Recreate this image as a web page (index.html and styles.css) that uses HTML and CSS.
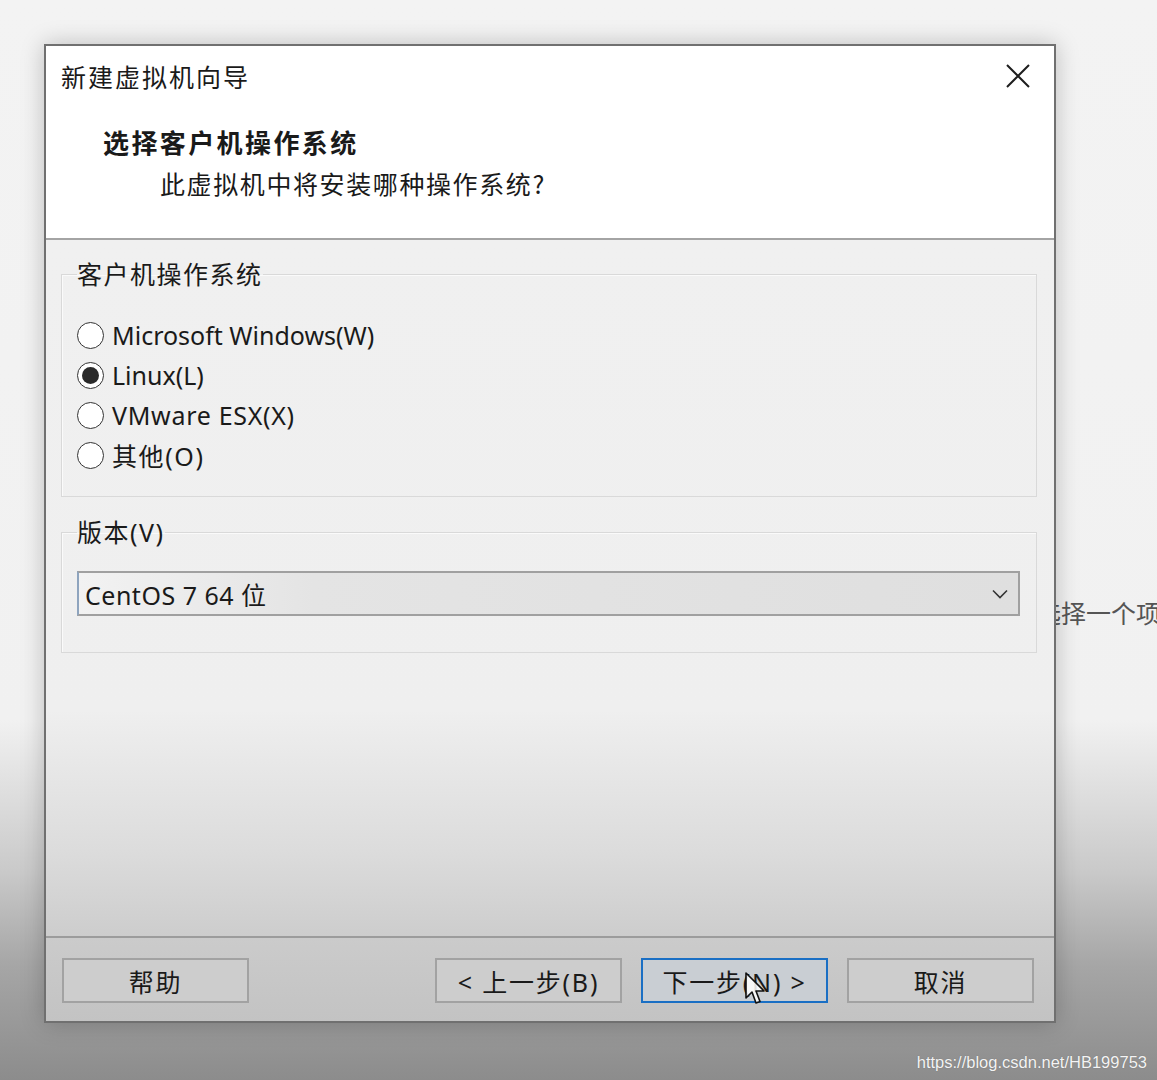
FILE: index.html
```html
<!DOCTYPE html>
<html lang="zh-CN">
<head>
    <meta charset="UTF-8">
    <title>新建虚拟机向导</title>
    <link rel="stylesheet" href="styles.css">
</head>
<body>

    <!-- window behind the wizard -->
    <div class="behind-text">选择一个项</div>

    <div class="dialog">
        <!-- Header -->
        <div class="header">
            <div class="title-row">
                <span class="title">新建虚拟机向导</span>
                <svg class="close" width="24" height="24" viewBox="0 0 24 24">
                    <path d="M1 1 L23 23 M23 1 L1 23" stroke="#1e1e1e" stroke-width="2" fill="none"/>
                </svg>
            </div>
            <div class="heading">选择客户机操作系统</div>
            <div class="subheading">此虚拟机中将安装哪种操作系统?</div>
        </div>

        <!-- Body -->
        <div class="body">
            <fieldset class="group group-os">
                <legend>客户机操作系统</legend>
                <div class="radio-row"><span class="radio"></span>Microsoft Windows(W)</div>
                <div class="radio-row"><span class="radio checked"></span>Linux(L)</div>
                <div class="radio-row wide"><span class="radio"></span>VMware ESX(X)</div>
                <div class="radio-row cjk"><span class="radio"></span>其他(O)</div>
            </fieldset>

            <fieldset class="group group-version">
                <legend>版本(V)</legend>
                <div class="select">
                    <span class="select-value">CentOS 7 64 位</span>
                    <svg width="16" height="10" viewBox="0 0 16 10">
                        <path d="M1 1.5 L8 8.5 L15 1.5" stroke="#333" stroke-width="1.6" fill="none"/>
                    </svg>
                </div>
            </fieldset>
        </div>

        <!-- Footer -->
        <div class="footer">
            <button class="btn">帮助</button>
            <div class="spacer"></div>
            <button class="btn">&lt; 上一步(B)</button>
            <button class="btn btn-default">下一步(N) &gt;</button>
            <button class="btn">取消</button>
        </div>

        <!-- mouse pointer over the Next button -->
        <svg class="cursor" width="22" height="34" viewBox="0 0 22 34">
            <path d="M1 1 L1 26 L7 20 L11 31 L15 29.5 L11 19 L19 19 Z" fill="#fff" fill-opacity="0.85" stroke="#111" stroke-width="1.6" stroke-linejoin="round"/>
        </svg>
    </div>

    <div class="watermark">https://blog.csdn.net/HB199753</div>

</body>
</html>
```

FILE: styles.css
```css
body {
    margin: 0;
    height: 1080px;
    overflow: hidden;
    position: relative;
    padding: 44px 0 0 44px;
    box-sizing: border-box;
    font-family: "Noto Sans", "Noto Sans CJK SC", sans-serif;
    color: #1a1a1a;
    background: linear-gradient(to bottom, #f3f3f3 0, #f1f1f1 720px, #cacaca 870px, #a6a6a6 965px, #8c8c8c 1080px);
}
.behind-text {
    position: absolute;
    left: 1036px;
    top: 594px;
    font-size: 25px;
    line-height: 36px;
    color: #555;
    white-space: nowrap;
    font-family: "Noto Sans CJK SC", sans-serif;
}
.dialog {
    position: relative;
    z-index: 1;
    width: 1012px;
    height: 979px;
    box-sizing: border-box;
    border: 2px solid #707070;
    display: flex;
    flex-direction: column;
    box-shadow: 0 0 22px rgba(0, 0, 0, 0.22);
    background: #f0f0f0;
}
.header {
    height: 194px;
    box-sizing: border-box;
    background: #fff;
    border-bottom: 2px solid #a4a4a4;
    padding: 12px 24px 0 15px;
}
.title-row {
    display: flex;
    justify-content: space-between;
    align-items: center;
    height: 36px;
}
.title {
    font-size: 25px;
    letter-spacing: 2px;
    font-family: "Noto Sans CJK SC", sans-serif;
}
.heading {
    margin: 30px 0 0 42px;
    font-size: 26px;
    line-height: 36px;
    font-weight: bold;
    font-family: "Noto Sans CJK SC", sans-serif;
    letter-spacing: 2.4px;
}
.subheading {
    margin: 5px 0 0 99px;
    font-size: 25px;
    line-height: 36px;
    letter-spacing: 1.6px;
    font-family: "Noto Sans CJK SC", sans-serif;
}
.body {
    flex: 1;
    padding: 16px 17px 0 15px;
    background: linear-gradient(to bottom, #f0f0f0 0, #efefef 470px, #dcdcdc 610px, #cdcdcd 696px);
}
.group {
    margin: 0;
    border: 1px solid #d9d9d9;
    box-shadow: inset 1px 1px 0 #fafafa;
    min-width: 0;
}
.group legend {
    padding: 0;
    font-size: 25px;
    line-height: 36px;
    letter-spacing: 1.5px;
}
.group-os {
    padding: 23px 0 21px 15px;
}
.group-version {
    margin-top: 17px;
    padding: 21px 16px 36px 15px;
}
.radio-row {
    display: flex;
    align-items: center;
    height: 40px;
    font-size: 25px;
}
.radio-row.wide {
    letter-spacing: 0.7px;
}
.radio-row.cjk {
    letter-spacing: 1.6px;
}
.radio {
    width: 25px;
    height: 25px;
    border: 1.5px solid #333;
    border-radius: 50%;
    background: #fff;
    margin-right: 8px;
    position: relative;
}
.radio.checked::after {
    content: "";
    position: absolute;
    left: 4px;
    top: 4px;
    width: 17px;
    height: 17px;
    border-radius: 50%;
    background: #2a2a2a;
}
.select {
    height: 45px;
    box-sizing: border-box;
    border: 2px solid #a0a0a0;
    border-left-color: #8ea4be;
    background: linear-gradient(to right, #f2f2f2 0, #e4e4e4 25%, #dfdfdf 100%);
    display: flex;
    align-items: center;
    justify-content: space-between;
    padding: 0 10px 0 6px;
    font-size: 25px;
}
.select-value {
    letter-spacing: 0.5px;
}
.footer {
    height: 85px;
    box-sizing: border-box;
    border-top: 2px solid #9c9c9c;
    padding: 20px 20px 18px 16px;
    display: flex;
    gap: 19px;
    background: linear-gradient(to bottom, #cbcbcb, #c3c3c3);
}
.spacer {
    flex: 1;
}
.btn {
    width: 187px;
    height: 45px;
    border: 2px solid #a2a2a2;
    background: #cdcdcd;
    font-family: "Noto Sans", "Noto Sans CJK SC", sans-serif;
    font-size: 25px;
    letter-spacing: 1.8px;
    color: #1a1a1a;
    padding: 0;
}
.btn-default {
    border-color: #1a6fc4;
    background: #c9ced3;
}
.cursor {
    position: absolute;
    left: 699px;
    top: 926px;
}
.watermark {
    position: absolute;
    right: 10px;
    bottom: 8px;
    font-family: "Liberation Sans", sans-serif;
    font-size: 16.5px;
    color: #f4f4f4;
    text-shadow: 0 0 1px rgba(0, 0, 0, 0.3);
}
```
